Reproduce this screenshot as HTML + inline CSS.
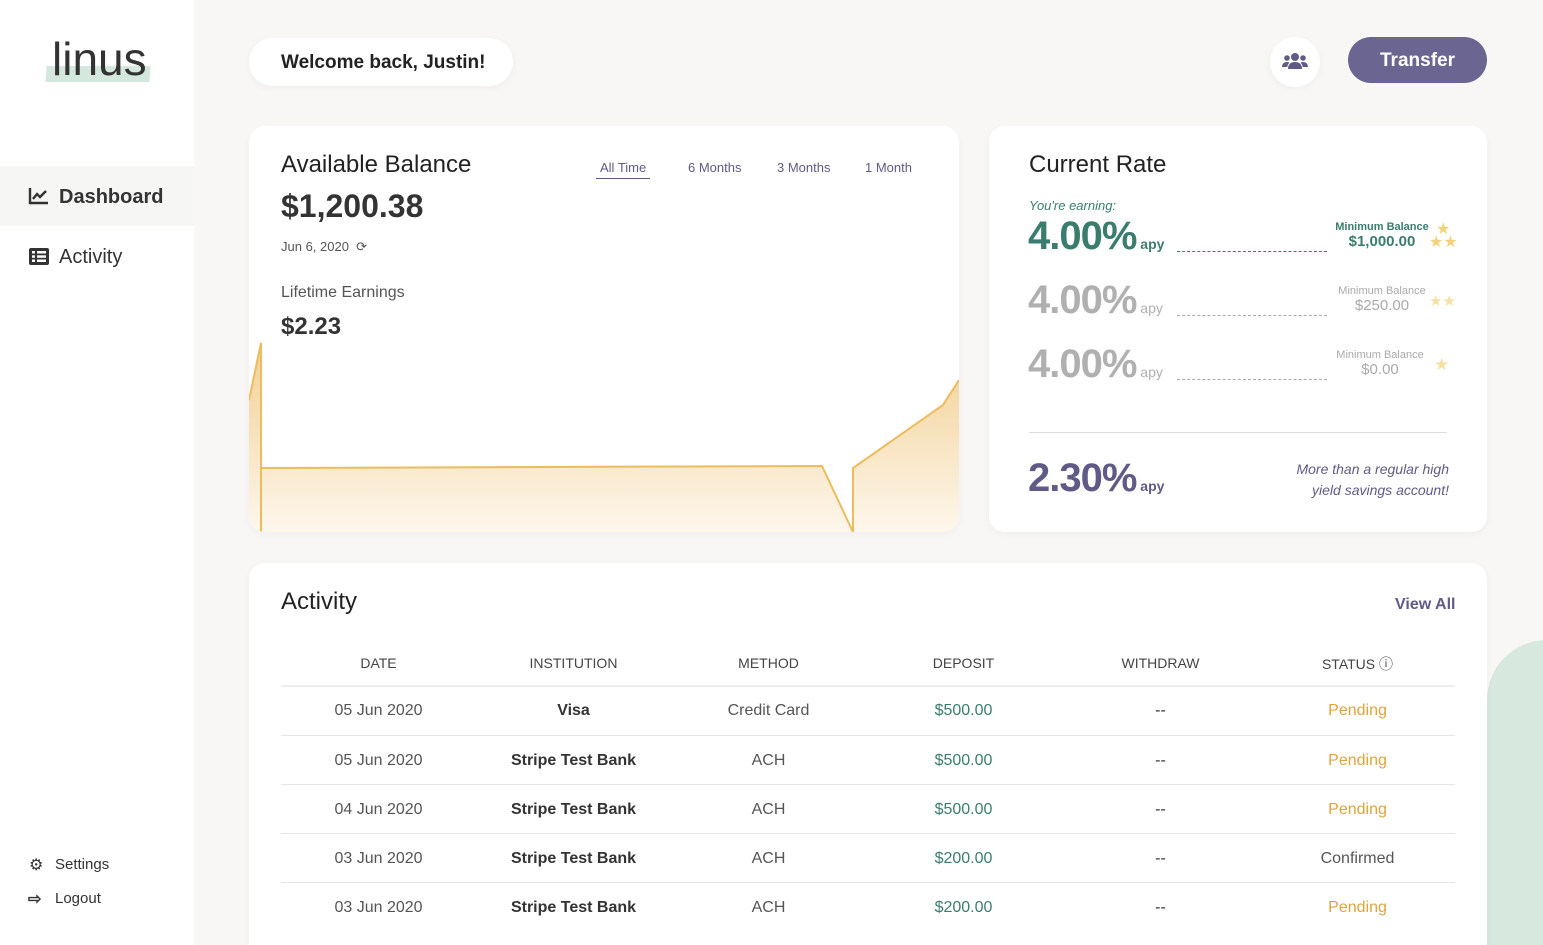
<!DOCTYPE html>
<html><head><meta charset="utf-8"><style>
*{margin:0;padding:0;box-sizing:border-box}
html,body{width:1543px;height:945px;overflow:hidden}
body{background:#f8f7f5;font-family:"Liberation Sans",sans-serif;color:#333;position:relative}
.a{position:absolute}
.side{left:0;top:0;width:194px;height:945px;background:#fff}
.card{background:#fff;border-radius:16px;box-shadow:0 2px 8px rgba(0,0,0,.04)}
.th{font-size:14px;color:#444;text-align:center;width:195px}
.row{left:281px;width:1174px;height:49px;border-top:1px solid #e6e6e6}
.row div{position:absolute;top:16px;width:195px;text-align:center;font-size:16px}
.pct{font-size:40px;font-weight:bold;letter-spacing:-1px}
.pct span{font-size:14px;letter-spacing:0}
</style></head><body>
<div class="a" style="left:1487px;top:640px;width:120px;height:320px;background:#d7e8df;border-radius:60px 0 0 0"></div>
<div class="a side">
 <div class="a" style="left:46px;top:66px;width:104px;height:16px;background:#d5e8dd;transform:skewX(-4deg)"></div>
 <div class="a" style="left:52px;top:32px;font-size:46px;color:#333">linus</div>
 <div class="a" style="left:0;top:166px;width:194px;height:60px;background:#f6f6f4"></div>
 <svg class="a" style="left:28px;top:187px" width="22" height="18" viewBox="0 0 22 18"><path d="M2 1v15h18M5 12l4-5 3 3 6-6" stroke="#333" stroke-width="2.4" fill="none"/></svg>
 <div class="a" style="left:59px;top:186px;font-size:20px;font-weight:bold">Dashboard</div>
 <svg class="a" style="left:29px;top:248px" width="20" height="17"><rect width="20" height="17" rx="2" fill="#333"/><g fill="#fff"><rect x="3" y="3" width="3" height="2.5"/><rect x="3" y="7.3" width="3" height="2.5"/><rect x="3" y="11.5" width="3" height="2.5"/><rect x="8" y="3" width="9" height="2.5"/><rect x="8" y="7.3" width="9" height="2.5"/><rect x="8" y="11.5" width="9" height="2.5"/></g></svg>
 <div class="a" style="left:59px;top:246px;font-size:20px">Activity</div>
 <div class="a" style="left:29px;top:855px;font-size:16px">⚙</div>
 <div class="a" style="left:55px;top:856px;font-size:15px">Settings</div>
 <div class="a" style="left:28px;top:889px;font-size:16px;font-weight:bold">⇨</div>
 <div class="a" style="left:55px;top:890px;font-size:15px">Logout</div>
</div>
<div class="a card" style="left:249px;top:38px;width:264px;height:48px;border-radius:24px"><div style="padding:14px 0 0 32px;font-size:19px;font-weight:bold;color:#222">Welcome back, Justin!</div></div>
<div class="a card" style="left:1270px;top:37px;width:50px;height:50px;border-radius:25px"></div>
<svg class="a" style="left:1282px;top:52px" width="26" height="18" viewBox="0 0 26 18"><g fill="#5f5b86"><circle cx="13" cy="5" r="4"/><circle cx="5" cy="6" r="2.8"/><circle cx="21" cy="6" r="2.8"/><path d="M6 17c0-5 3-7 7-7s7 2 7 7z"/><path d="M0 15c0-3 2-5 5-5 1 0 2 .3 2.5 .7C6 12 5.5 13 5.3 15z"/><path d="M26 15c0-3-2-5-5-5-1 0-2 .3-2.5 .7C20 12 20.5 13 20.7 15z"/></g></svg>
<div class="a" style="left:1348px;top:37px;width:139px;height:46px;border-radius:23px;background:#6a6591;color:#fff;font-size:19px;font-weight:bold;text-align:center;line-height:48px">Transfer</div>

<div class="a card" style="left:249px;top:126px;width:710px;height:406px;overflow:hidden">
 <div class="a" style="left:32px;top:25px;font-size:24px;color:#222">Available Balance</div>
 <div class="a" style="left:32px;top:62px;font-size:32px;font-weight:bold;color:#333">$1,200.38</div>
 <div class="a" style="left:32px;top:113px;font-size:13px;color:#555">Jun 6, 2020 &nbsp;⟳</div>
 <div class="a" style="left:32px;top:158px;font-size:16px;color:#555">Lifetime Earnings</div>
 <div class="a" style="left:32px;top:187px;font-size:24px;font-weight:bold;color:#333">$2.23</div>
 <div class="a" style="left:347px;top:34px;font-size:13px;color:#5f5b86;border-bottom:1px solid #5f5b86;padding:0 4px 3px">All Time</div>
 <div class="a" style="left:439px;top:34px;font-size:13px;color:#5f5b86">6 Months</div>
 <div class="a" style="left:528px;top:34px;font-size:13px;color:#5f5b86">3 Months</div>
 <div class="a" style="left:616px;top:34px;font-size:13px;color:#5f5b86">1 Month</div>
 <svg class="a" style="left:0;top:0" width="710" height="406"><defs><linearGradient id="g" x1="0" y1="0" x2="0" y2="1"><stop offset="0" stop-color="#f1ca85"/><stop offset="1" stop-color="#fdf6ea"/></linearGradient></defs>
 <path d="M0 274L12 217L12 342L573 340L604 406L604 342L694 279L710 254L710 406L0 406Z" fill="url(#g)" opacity=".9"/>
 <path d="M0 274L12 217L12 406M12 342L573 340L604 406L604 342L694 279L710 254" fill="none" stroke="#ecbc5e" stroke-width="2"/></svg>
</div>

<div class="a card" style="left:989px;top:126px;width:498px;height:406px">
 <div class="a" style="left:40px;top:25px;font-size:24px;color:#222">Current Rate</div>
 <div class="a" style="left:40px;top:72px;font-size:13px;font-style:italic;color:#3a7d6e">You're earning:</div>
 <div class="a pct" style="left:39px;top:88px;color:#3a7d6e">4.00%<span> apy</span></div>
 <div class="a" style="left:188px;top:125px;width:150px;border-top:1px dashed #3a7d6e"></div>
 <div class="a" style="left:346px;top:95px;font-size:11px;font-weight:bold;color:#3a7d6e;text-align:center;width:94px">Minimum Balance<br><span style="font-size:15px">$1,000.00</span></div>
 <div class="a" style="left:440px;top:97px;font-size:16px;color:#f3d27a;line-height:13px;text-align:center">★<br>★★</div>
 <div class="a pct" style="left:39px;top:152px;color:#b0b0b0">4.00%<span style="font-weight:normal"> apy</span></div>
 <div class="a" style="left:188px;top:189px;width:150px;border-top:1px dashed #aaa"></div>
 <div class="a" style="left:346px;top:159px;font-size:11px;color:#aaa;text-align:center;width:94px">Minimum Balance<br><span style="font-size:15px">$250.00</span></div>
 <div class="a" style="left:440px;top:166px;font-size:15px;color:#f6e1a4">★★</div>
 <div class="a pct" style="left:39px;top:216px;color:#b0b0b0">4.00%<span style="font-weight:normal"> apy</span></div>
 <div class="a" style="left:188px;top:253px;width:150px;border-top:1px dashed #aaa"></div>
 <div class="a" style="left:344px;top:223px;font-size:11px;color:#aaa;text-align:center;width:94px">Minimum Balance<br><span style="font-size:15px">$0.00</span></div>
 <div class="a" style="left:445px;top:229px;font-size:17px;color:#f6e1a4">★</div>
 <div class="a" style="left:40px;top:306px;width:418px;border-top:1px solid #ddd"></div>
 <div class="a pct" style="left:39px;top:330px;color:#5f5b86">2.30%<span> apy</span></div>
 <div class="a" style="left:280px;top:333px;width:180px;font-size:14px;font-style:italic;color:#5f5b86;text-align:right;line-height:21px">More than a regular high yield savings account!</div>
</div>

<div class="a card" style="left:249px;top:563px;width:1238px;height:400px">
 <div class="a" style="left:32px;top:25px;font-size:24px;color:#222">Activity</div>
 <div class="a" style="left:1146px;top:33px;font-size:16px;font-weight:bold;color:#5f5b86">View All</div>
</div>
<div class="a th" style="left:281px;top:655px">DATE</div>
<div class="a th" style="left:476px;top:655px">INSTITUTION</div>
<div class="a th" style="left:671px;top:655px">METHOD</div>
<div class="a th" style="left:866px;top:655px">DEPOSIT</div>
<div class="a th" style="left:1063px;top:655px">WITHDRAW</div>
<div class="a th" style="left:1260px;top:654px">STATUS ⓘ</div>
<div class="a" style="left:281px;top:685px;width:1174px;border-top:2px solid #eee"></div>
<div class="a row" style="top:686px;border-top:none"><div style="left:0;color:#555">05 Jun 2020</div><div style="left:195px;font-weight:bold">Visa</div><div style="left:390px;color:#555">Credit Card</div><div style="left:585px;color:#3a7d6e">$500.00</div><div style="left:782px">--</div><div style="left:979px;color:#e0a43c">Pending</div></div>
<div class="a row" style="top:735px"><div style="left:0;color:#555">05 Jun 2020</div><div style="left:195px;font-weight:bold">Stripe Test Bank</div><div style="left:390px;color:#555">ACH</div><div style="left:585px;color:#3a7d6e">$500.00</div><div style="left:782px">--</div><div style="left:979px;color:#e0a43c">Pending</div></div>
<div class="a row" style="top:784px"><div style="left:0;color:#555">04 Jun 2020</div><div style="left:195px;font-weight:bold">Stripe Test Bank</div><div style="left:390px;color:#555">ACH</div><div style="left:585px;color:#3a7d6e">$500.00</div><div style="left:782px">--</div><div style="left:979px;color:#e0a43c">Pending</div></div>
<div class="a row" style="top:833px"><div style="left:0;color:#555">03 Jun 2020</div><div style="left:195px;font-weight:bold">Stripe Test Bank</div><div style="left:390px;color:#555">ACH</div><div style="left:585px;color:#3a7d6e">$200.00</div><div style="left:782px">--</div><div style="left:979px;color:#555">Confirmed</div></div>
<div class="a row" style="top:882px"><div style="left:0;color:#555">03 Jun 2020</div><div style="left:195px;font-weight:bold">Stripe Test Bank</div><div style="left:390px;color:#555">ACH</div><div style="left:585px;color:#3a7d6e">$200.00</div><div style="left:782px">--</div><div style="left:979px;color:#e0a43c">Pending</div></div>
</body></html>
